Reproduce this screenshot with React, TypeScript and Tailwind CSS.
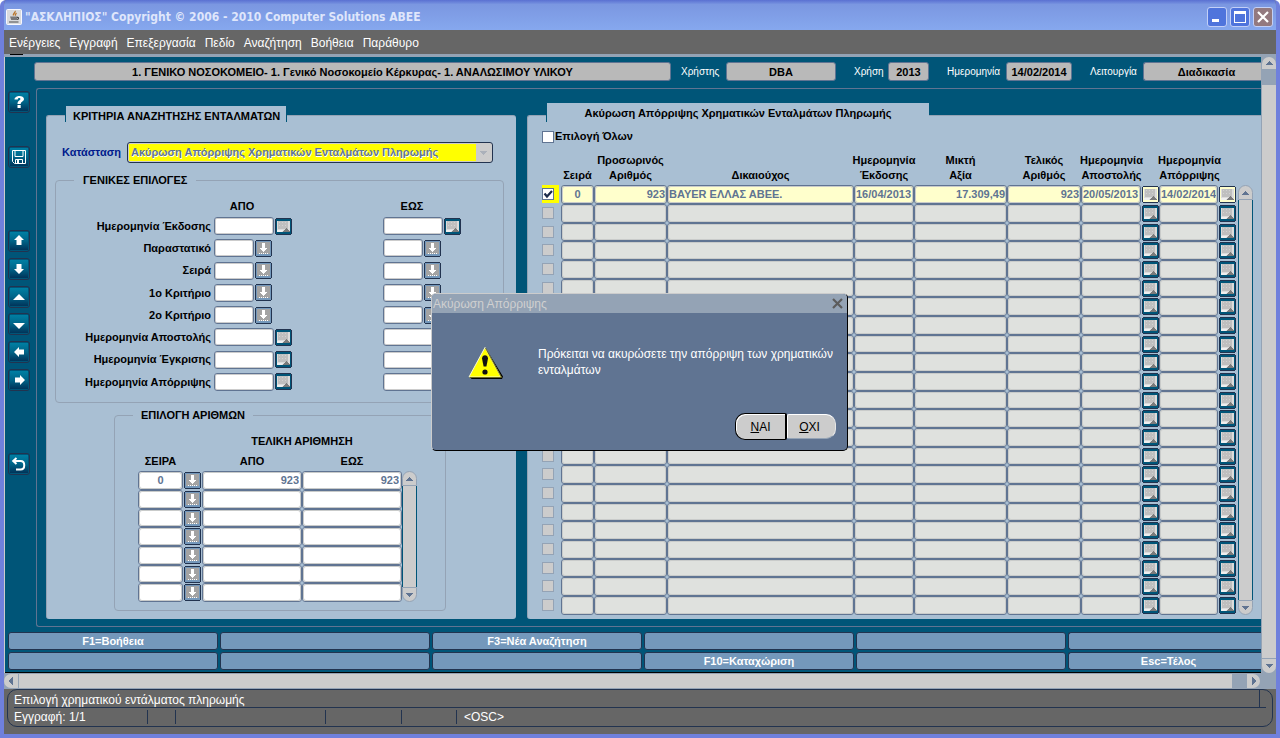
import { useState } from "react";
import type { ReactNode } from "react";
import clsx from "clsx";

const MENU = ["Ενέργειες", "Εγγραφή", "Επεξεργασία", "Πεδίο", "Αναζήτηση", "Βοήθεια", "Παράθυρο"];

const CRITERIA = [
  { label: "Ημερομηνία Έκδοσης", date: true },
  { label: "Παραστατικό", date: false },
  { label: "Σειρά", date: false },
  { label: "1ο Κριτήριο", date: false },
  { label: "2ο Κριτήριο", date: false },
  { label: "Ημερομηνία Αποστολής", date: true },
  { label: "Ημερομηνία Έγκρισης", date: true },
  { label: "Ημερομηνία Απόρριψης", date: true },
];

const NUMBER_ROWS = [["0", "923", "923"], ...Array.from({ length: 6 }, () => ["", "", ""])];

interface Column {
  id: string;
  title: string[];
  align: string;
  picker?: boolean;
}

const COLUMNS: Column[] = [
  { id: "series", title: ["Σειρά"], align: "text-center" },
  { id: "temp", title: ["Προσωρινός", "Αριθμός"], align: "text-right" },
  { id: "payee", title: ["Δικαιούχος"], align: "text-left" },
  { id: "issued", title: ["Ημερομηνία", "Έκδοσης"], align: "text-left" },
  { id: "gross", title: ["Μικτή", "Αξία"], align: "text-right" },
  { id: "final", title: ["Τελικός", "Αριθμός"], align: "text-right" },
  { id: "sent", title: ["Ημερομηνία", "Αποστολής"], align: "text-left", picker: true },
  { id: "rejected", title: ["Ημερομηνία", "Απόρριψης"], align: "text-left", picker: true },
];

const FIRST_ROW: Record<string, string> = {
  series: "0",
  temp: "923",
  payee: "BAYER ΕΛΛΑΣ ΑΒΕΕ.",
  issued: "16/04/2013",
  gross: "17.309,49",
  final: "923",
  sent: "20/05/2013",
  rejected: "14/02/2014",
};

const ROWS: Record<string, string>[] = [FIRST_ROW, ...Array.from({ length: 22 }, () => ({}))];

const FUNCTION_KEYS = ["F1=Βοήθεια", "", "F3=Νέα Αναζήτηση", "", "", "", "", "", "", "F10=Καταχώριση", "", "Esc=Τέλος"];

const rowHeight = (i: number) => (i % 3 === 2 ? "h-[18px]" : "h-[19px]");

const CELL = "rounded-[3px] border border-[#607492] p-0 shadow-[inset_0_0_0_1px_#c9cbca]";

function JavaIcon() {
  return (
    <svg width="16" height="16" viewBox="0 0 16 16">
      <rect x="0.5" y="0.5" width="15" height="15" rx="1" fill="#d9dadd" stroke="#f8f8ff" />
      <path d="M9 2c1 1.500-2.500 2.500-1.500 4.500M10.500 4c-1 .8-1.500 1.500-1 2.800" fill="none" stroke="#b8742a" strokeWidth="1.400" />
      <path d="M4 7.500h7.500l-.8 3.500h-5.500z" fill="#77777a" />
      <path d="M11 8.500c2.200-.5 2 2-.3 2M3 13h9.500" fill="none" stroke="#4a4a4c" strokeWidth="1.200" />
    </svg>
  );
}

function ArrowGlyph({ dir }: { dir: "up" | "down" | "left" | "right" }) {
  const paths = {
    up: "M4 0h1v1h1v1h1v1h1v1H1V3h1V2h1V1h1z",
    down: "M1 0h7v1H7v1H6v1H5v1H4V3H3V2H2V1H1z",
    left: "M4 0v8H3V7H2V6H1V5H0V3h1V2h1V1h1V0z",
    right: "M0 0h1v1h1v1h1v1h1v2H3v1H2v1H1v1H0z",
  };
  const sideways = dir === "left" || dir === "right";
  return (
    <svg width={sideways ? 4 : 9} height={sideways ? 8 : 4} viewBox={sideways ? "0 0 4 8" : "0 0 9 4"} shapeRendering="crispEdges">
      <path d={paths[dir]} fill="#607492" />
    </svg>
  );
}

function CalendarButton({ label, active }: { label: string; active?: boolean }) {
  return (
    <button type="button" aria-label={label} className="block">
      <svg width="17" height="17" viewBox="0 0 17 17" shapeRendering="crispEdges">
        <path d="M1 0h15v1h1v15h-1v1H1v-1H0V1h1z" fill="#22334f" />
        <rect x="1" y="1" width="15" height="15" fill={active ? "#ffffcc" : "#005578"} />
        <rect x="2" y="3" width="13" height="11" fill="#dcdcdc" />
        <rect x="3" y="3" width="10" height="8" fill="#bfbfbf" />
        <path d="M4 4h1v1H4zM7 4h1v1H7zM10 4h1v1h-1zM4 7h1v1H4zM7 7h1v1H7zM10 7h1v1h-1z" fill="#d2d2d2" />
        <path d="M11 10h1v1h1v1h1v1h1v1H8v-1h1v-1h1v-1h1z" fill="#7b7b7b" />
        <path d="M2 12h6v1H7v1H2z" fill="#efefef" />
      </svg>
    </button>
  );
}

function ListButton({ label }: { label: string }) {
  return (
    <button type="button" aria-label={label} className="block">
      <svg width="17" height="17" viewBox="0 0 17 17" shapeRendering="crispEdges">
        <path d="M1 0h15v1h1v15h-1v1H1v-1H0V1h1z" fill="#22334f" />
        <rect x="1" y="1" width="15" height="15" fill="#7498bb" />
        <rect x="2" y="2" width="13" height="12" fill="#a3a3a3" />
        <path d="M7 3h3v5h2v1h-1v1h-1v1H9v1H8v-1H7v-1H6V9H5V8h2zM4 13h1v1H4zM6 13h1v1H6zM8 13h1v1H8zM10 13h1v1h-1zM12 13h1v1h-1z" fill="#fff" />
      </svg>
    </button>
  );
}

function ToolButton({ label, className, children }: { label: string; className?: string; children: ReactNode }) {
  return (
    <button
      type="button"
      aria-label={label}
      className={clsx("size-[22px] rounded-[3px] border border-[#22334f] p-px", className)}
    >
      <svg
        width="18"
        height="18"
        viewBox="0 0 18 18"
        fill="#fff"
        className="bg-linear-to-b from-[#007fa3] via-[#006488] to-[#00345a]"
      >
        {children}
      </svg>
    </button>
  );
}

function ScrollColumn({ label, className }: { label: string; className: string }) {
  return (
    <div className={clsx("flex w-[15px] shrink-0 flex-col", className)}>
      <button type="button" aria-label={`${label} πάνω`} className="flex h-[15px] items-center justify-center rounded-t-full border border-[#94a3b5] bg-[#ccc]">
        <ArrowGlyph dir="up" />
      </button>
      <div className="flex-1 border-x border-[#005578] bg-[#ccc]" />
      <button type="button" aria-label={`${label} κάτω`} className="flex h-[15px] items-center justify-center rounded-b-full border border-[#94a3b5] bg-[#ccc]">
        <ArrowGlyph dir="down" />
      </button>
    </div>
  );
}

function Tick({ label, checked, onChange, disabled }: { label: string; checked: boolean; onChange?: () => void; disabled?: boolean }) {
  return (
    <span className="relative block size-3">
      <input
        type="checkbox"
        aria-label={label}
        checked={checked}
        disabled={disabled}
        onChange={() => onChange?.()}
        className="block size-3 appearance-none border border-[#607492] bg-white disabled:border-[#94a3b5] disabled:bg-[#ccc]"
      />
      {checked && (
        <svg width="12" height="12" viewBox="0 0 12 12" className="pointer-events-none absolute inset-0">
          <path d="M2.500 5.500 5 8.500 10 3" fill="none" stroke="#1b2a49" strokeWidth="2.200" />
        </svg>
      )}
    </span>
  );
}

interface HeaderFieldProps {
  label: string;
  value: string;
  labelWidth: string;
  width: string;
}

function HeaderField({ label, value, labelWidth, width }: HeaderFieldProps) {
  return (
    <label className="flex shrink-0 items-center text-[10px] font-normal text-white">
      <span className={labelWidth}>{label}</span>
      <input
        readOnly
        defaultValue={value}
        className={clsx("h-[19px] rounded-[3px] border border-[#607492] bg-[#b9b9b9] text-center text-[11px] font-bold text-black", width)}
      />
    </label>
  );
}

function TitleBar() {
  const box = "flex size-5 items-center justify-center rounded-[3px] border border-[#c3d0f7]";
  return (
    <header className="flex h-[30px] items-center gap-[3px] bg-linear-to-b from-[#5a70d2] via-[#7b97e1] via-15% to-[#86a8ee] pt-[3px] pr-[3px] pl-[2px] text-[#dfe6fb]">
      <JavaIcon />
      <h1 className="flex-1 font-['DejaVu_Sans_Condensed','DejaVu_Sans',sans-serif] text-[12px] leading-4">
        "ΑΣΚΛΗΠΙΟΣ" Copyright © 2006 - 2010 Computer Solutions ABEE
      </h1>
      <button type="button" aria-label="Ελαχιστοποίηση" className={clsx(box, "bg-[#4f74dc]")}>
        <svg width="12" height="12" viewBox="0 0 12 12">
          <path d="M1 8h7v3H1z" fill="#fff" />
        </svg>
      </button>
      <button type="button" aria-label="Μεγιστοποίηση" className={clsx(box, "bg-[#4f74dc]")}>
        <svg width="12" height="12" viewBox="0 0 12 12" shapeRendering="crispEdges">
          <path d="M0 0h12v12H0zM1 3v8h10V3z" fill="#fff" fillRule="evenodd" />
        </svg>
      </button>
      <button type="button" aria-label="Κλείσιμο" className={clsx(box, "bg-[#93797f]")}>
        <svg width="12" height="12" viewBox="0 0 12 12">
          <path d="m1 1 10 10M11 1 1 11" stroke="#fff" strokeWidth="2.200" />
        </svg>
      </button>
    </header>
  );
}

function Toolbar() {
  return (
    <aside className="flex w-[31px] shrink-0 flex-col gap-[6px] pt-[3px] pl-[3px]">
      <ToolButton label="Βοήθεια" className="mb-[27px]">
        <path d="M4.500 6.500C4.500 1.800 14 1.800 14 6c0 2.500-3.300 2.500-3.300 5H7.500c0-3.500 2.900-3.500 2.900-5 0-1.300-2.600-1.200-2.600.5zM7.500 12h3.200v3H7.500z" />
      </ToolButton>
      <ToolButton label="Αποθήκευση" className="mb-14">
        <path d="M2.500 2.500h13v13h-11l-2-2z" fill="none" stroke="#fff" />
        <path d="M5 2.500v6h8v-6M5.500 15.500v-4h7v4" fill="none" stroke="#fff" />
        <path d="M7 12h2v3H7z" />
      </ToolButton>
      <ToolButton label="Προηγούμενη εγγραφή">
        <path d="M9 3l5 5h-2.500v5h-5V8H4z" />
      </ToolButton>
      <ToolButton label="Επόμενη εγγραφή">
        <path d="M9 14l5-5h-2.500V4h-5v5H4z" />
      </ToolButton>
      <ToolButton label="Πάνω">
        <path d="M9 6l6 6H3z" />
      </ToolButton>
      <ToolButton label="Κάτω" className="-mt-px">
        <path d="M9 14L3 8h12z" />
      </ToolButton>
      <ToolButton label="Προηγούμενο πεδίο">
        <path d="M4 9l5-5v2.500h5v5H9V14z" />
      </ToolButton>
      <ToolButton label="Επόμενο πεδίο" className="mb-14">
        <path d="M15 9l-5-5v2.500H5v5h5V14z" />
      </ToolButton>
      <ToolButton label="Επιστροφή">
        <path d="M3 6h7.500c5 0 5 8.500 0 8.500H6M6.500 3 3.200 6l3.300 3" fill="none" stroke="#fff" strokeWidth="2" />
      </ToolButton>
    </aside>
  );
}

function CriteriaField({ label, date }: { label: string; date: boolean }) {
  return (
    <div className="flex items-center gap-px">
      <input
        aria-label={label}
        className={clsx("h-[18px] rounded-[3px] border border-[#607492] bg-white shadow-[inset_0_0_0_1px_#ccc]", date ? "w-[60px]" : "w-10")}
      />
      {date ? <CalendarButton label={`${label} ημερολόγιο`} /> : <ListButton label={`${label} λίστα`} />}
    </div>
  );
}

function SearchPanel() {
  return (
    <section className="w-[470px] shrink-0 rounded-[3px] border-t border-l border-[#94a3b5] bg-[#a9bfd3] pb-2">
      <h2 className="-mt-[10px] ml-[18px] h-4 w-[222px] border-x border-[#005578] bg-[#a9bfd3] pl-[7px] leading-5 whitespace-nowrap">
        ΚΡΙΤΗΡΙΑ ΑΝΑΖΗΤΗΣΗΣ ΕΝΤΑΛΜΑΤΩΝ
      </h2>

      <div className="mt-5 flex items-center pl-[15px]">
        <label htmlFor="status" className="w-[65px] text-[#001a8c]">
          Κατάσταση
        </label>
        <div className="flex h-[21px] w-[366px] rounded-[3px] border border-[#22334f] bg-[#ccc] p-px">
          <select
            id="status"
            disabled
            className="min-w-0 flex-1 appearance-none bg-[#ffff00] pl-[2px] text-[#607492] opacity-100 [text-shadow:1px_1px_0_#fff]"
          >
            <option>Ακύρωση Απόρριψης Χρηματικών Ενταλμάτων Πληρωμής</option>
          </select>
          <span className="flex w-[15px] items-center justify-center opacity-30">
            <ArrowGlyph dir="down" />
          </span>
        </div>
      </div>

      <fieldset className="mt-[10px] mr-3 ml-2 rounded-[4px] border border-[#94a3b5] pb-[9px]">
        <legend className="ml-[18px] px-[9px] leading-[15px]">ΓΕΝΙΚΕΣ ΕΠΙΛΟΓΕΣ</legend>
        <div className="grid grid-cols-[158px_169px_1fr] pt-[11px] pb-px leading-[15px]">
          <span />
          <span className="w-[56px] text-center">ΑΠΟ</span>
          <span className="w-[58px] text-center">ΕΩΣ</span>
        </div>
        <div className="grid h-[178px] auto-rows-fr">
          {CRITERIA.map(({ label, date }) => (
            <div key={label} className="grid grid-cols-[158px_169px_1fr] items-center">
              <span className="pr-[3px] text-right">{label}</span>
              <CriteriaField label={`${label} από`} date={date} />
              <CriteriaField label={`${label} έως`} date={date} />
            </div>
          ))}
        </div>
      </fieldset>

      <fieldset className="mt-[5px] ml-[67px] w-[332px] rounded-[4px] border border-[#94a3b5] pb-2">
        <legend className="ml-[18px] px-2 leading-[15px]">ΕΠΙΛΟΓΗ ΑΡΙΘΜΩΝ</legend>
        <div className="flex pt-[11px] pl-[23px]">
          <table className="w-[264px] table-fixed border-separate border-spacing-0">
            <colgroup>
              <col className="w-[45px]" />
              <col className="w-[19px]" />
              <col />
              <col />
            </colgroup>
            <thead>
              <tr className="h-5 align-top leading-[15px]">
                <td colSpan={2} />
                <th colSpan={2} className="p-0">ΤΕΛΙΚΗ ΑΡΙΘΜΗΣΗ</th>
              </tr>
              <tr className="h-[17px] align-top leading-[15px]">
                <th className="p-0">ΣΕΙΡΑ</th>
                <td />
                <th className="p-0">ΑΠΟ</th>
                <th className="p-0">ΕΩΣ</th>
              </tr>
            </thead>
            <tbody>
              {NUMBER_ROWS.map(([series, from, to], i) => (
                <tr key={i} className={rowHeight(i)}>
                  <td className={clsx(CELL, "bg-white")}>
                    <input aria-label="Σειρά" defaultValue={series} className="block h-4 w-full text-center text-[#607492]" />
                  </td>
                  <td className="p-0 pl-px">
                    <ListButton label="Λίστα σειρών" />
                  </td>
                  <td className={clsx(CELL, "bg-white")}>
                    <input aria-label="Από" defaultValue={from} className="block h-4 w-full pr-[2px] text-right text-[#607492]" />
                  </td>
                  <td className={clsx(CELL, "bg-white")}>
                    <input aria-label="Έως" defaultValue={to} className="block h-4 w-full pr-[2px] text-right text-[#607492]" />
                  </td>
                </tr>
              ))}
            </tbody>
          </table>
          <ScrollColumn label="Κύλιση αριθμών" className="mt-[37px]" />
        </div>
      </fieldset>
    </section>
  );
}

function OrdersPanel() {
  const [all, setAll] = useState(false);
  const [selected, setSelected] = useState(true);

  return (
    <section className="min-w-0 flex-1 rounded-l-[3px] border-t border-l border-[#94a3b5] bg-[#a9bfd3] pr-2">
      <h2 className="-mt-[13px] ml-[18px] h-[19px] w-[383px] border-l border-[#005578] bg-[#a9bfd3] text-center leading-5">
        Ακύρωση Απόρριψης Χρηματικών Ενταλμάτων Πληρωμής
      </h2>
      <label className="mt-2 ml-[14px] flex h-[13px] items-center gap-px">
        <Tick label="Επιλογή Όλων" checked={all} onChange={() => setAll(!all)} />
        Επιλογή Όλων
      </label>

      <div className="flex gap-px pl-[14px]">
        <table className="w-full min-w-0 table-fixed border-separate border-spacing-0">
          <colgroup>
            <col className="w-[19px]" />
            <col className="w-[33px]" />
            <col className="w-[73px]" />
            <col />
            <col className="w-[60px]" />
            <col className="w-[93px]" />
            <col className="w-[74px]" />
            <col className="w-[60px]" />
            <col className="w-[18px]" />
            <col className="w-[59px]" />
            <col className="w-[19px]" />
          </colgroup>
          <thead>
            <tr className="h-[42px] align-bottom leading-[15px]">
              <td />
              {COLUMNS.map(col => (
                <th key={col.id} colSpan={col.picker ? 2 : 1} className={clsx("p-0 pb-[2px] whitespace-nowrap", col.picker && "pr-[17px]")}>
                  <span className="flex flex-col items-center">
                    {col.title.map(line => (
                      <span key={line}>{line}</span>
                    ))}
                  </span>
                </th>
              ))}
            </tr>
          </thead>
          <tbody>
            {ROWS.map((row, i) => (
              <tr key={i} className={rowHeight(i)}>
                <td className="p-0 align-top">
                  <div className={clsx("h-[18px] w-[17px] pt-[3px]", i === 0 && "bg-[#ffff00]")}>
                    <Tick label={`Εγγραφή ${i + 1}`} checked={i === 0 && selected} disabled={i > 0} onChange={() => setSelected(!selected)} />
                  </div>
                </td>
                {COLUMNS.map(col => [
                  <td key={col.id} className={clsx(CELL, i === 0 ? "bg-[#ffffcc]" : "bg-[#dfe1de]")}>
                    <input
                      readOnly
                      aria-label={col.title.join(" ")}
                      defaultValue={row[col.id] ?? ""}
                      className={clsx("block h-4 w-full px-px text-[#607492]", col.align)}
                    />
                  </td>,
                  col.picker && (
                    <td key={`${col.id}-picker`} className="p-0 pl-px">
                      <CalendarButton label={`${col.title.join(" ")} ημερολόγιο`} active={i === 0} />
                    </td>
                  ),
                ])}
              </tr>
            ))}
          </tbody>
        </table>
        <ScrollColumn label="Κύλιση ενταλμάτων" className="mt-[42px]" />
      </div>
    </section>
  );
}

function ConfirmDialog() {
  return (
    <div
      role="dialog"
      aria-labelledby="confirm-title"
      className="absolute top-[293px] left-[427px] w-[417px] overflow-hidden rounded-[5px] border border-t-[#ccc] border-r-black border-b-black border-l-[#ccc] bg-[#607492] text-[12px] font-normal text-white"
    >
      <div className="flex h-[19px] items-center justify-between bg-[#94a3b5] pr-1 pl-px text-[#d0d0d0]">
        <h2 id="confirm-title">Ακύρωση Απόρριψης</h2>
        <button type="button" aria-label="Κλείσιμο">
          <svg width="11" height="11" viewBox="0 0 11 11">
            <path d="m1 1 9 9M10 1l-9 9" stroke="#5c5c5c" strokeWidth="2.200" />
          </svg>
        </button>
      </div>
      <div className="flex pt-[33px] pl-9">
        <svg width="36" height="34" viewBox="0 0 36 34">
          <path d="M17.500 2 35 30.500 34 33H3z" fill="#000" />
          <path d="M17 1.500 33 31H1z" fill="#ffff00" stroke="#f6f6d8" />
          <path d="M1.500 31.500h32L17.500 2" fill="none" stroke="#6d6a1c" />
          <path d="M14 12.500c0-4.500 6-4.500 6 0l-1.600 8h-2.800z" fill="#111" />
          <circle cx="17" cy="26" r="2.600" fill="#111" />
        </svg>
        <p className="ml-[34px] w-[300px] leading-4">Πρόκειται να ακυρώσετε την απόρριψη των χρηματικών ενταλμάτων</p>
      </div>
      <div className="flex items-center justify-end pt-[33px] pr-[11px] pb-[10px] text-black">
        <button type="button" className="h-[27px] w-[52px] rounded-l-[10px] rounded-r-[2px] border border-r-2 border-black bg-[#ccc] shadow-[inset_1px_1px_0_#fff]">
          <u>Ν</u>ΑΙ
        </button>
        <button type="button" className="h-[25px] w-[49px] rounded-l-[2px] rounded-r-[10px] border border-t-white border-r-[#e6e6e6] border-b-[#94a3b5] border-l-white bg-[#ccc] pr-1">
          <u>Ο</u>ΧΙ
        </button>
      </div>
    </div>
  );
}

function StatusBar() {
  return (
    <footer className="bg-[#666] px-[3px] pb-[6px] text-[12px] font-normal text-white">
      <div className="rounded-[10px] border border-[#22334f] px-[6px]">
        <div className="flex h-[18px] justify-between border-b border-[#22334f] leading-5">
          <span>Επιλογή χρηματικού εντάλματος πληρωμής</span>
          <span className="mr-[6px] w-px bg-[#22334f]" />
        </div>
        <div className="flex h-[18px] items-center leading-[18px]">
          <span className="w-[133px]">Εγγραφή: 1/1</span>
          <span className="h-[14px] w-7 border-l border-[#22334f]" />
          <span className="h-[14px] w-[150px] border-l border-[#22334f]" />
          <span className="h-[14px] w-[76px] border-l border-[#22334f]" />
          <span className="h-[14px] w-14 border-x border-[#22334f]" />
          <span className="ml-[7px]">&lt;OSC&gt;</span>
        </div>
      </div>
    </footer>
  );
}

export default function App() {
  return (
    <div className="relative flex min-h-screen flex-col overflow-hidden rounded-t-[6px] border-x-4 border-b-4 border-[#6f80dc] bg-[#666] font-['Liberation_Sans',Arial,sans-serif] text-[11px] font-bold text-black">
      <TitleBar />

      <nav className="flex h-6 items-center gap-[9px] bg-[#666] pt-px pl-[5px] font-normal text-white">
        {MENU.map(item => (
          <button key={item} type="button" className="text-[12px]">
            {item}
          </button>
        ))}
      </nav>
      <div className="h-[3px] bg-[#94a3b5]">
        <div className="ml-[6px] h-px w-[13px] bg-black" />
      </div>

      <div className="flex border-l border-[#ccc] bg-[#005578]">
        <main className="min-w-0 flex-1 border-b border-black pt-[5px] pb-[2px]">
          <div className="flex items-center pl-[29px]">
            <input
              readOnly
              aria-label="Μονάδα"
              defaultValue="1. ΓΕΝΙΚΟ ΝΟΣΟΚΟΜΕΙΟ- 1. Γενικό Νοσοκομείο Κέρκυρας- 1. ΑΝΑΛΩΣΙΜΟΥ ΥΛΙΚΟΥ"
              className="mr-[10px] h-[19px] min-w-0 flex-1 rounded-[3px] border border-[#607492] bg-[#b9b9b9] text-center"
            />
            <div className="flex gap-[18px]">
              <HeaderField label="Χρήστης" value="DBA" labelWidth="w-[45px]" width="w-[110px]" />
              <HeaderField label="Χρήση" value="2013" labelWidth="w-[34px]" width="w-[41px]" />
              <HeaderField label="Ημερομηνία" value="14/02/2014" labelWidth="w-[59px]" width="w-[66px]" />
              <HeaderField label="Λειτουργία" value="Διαδικασία" labelWidth="w-[53px]" width="w-[118px] rounded-r-none border-r-0 pl-2" />
            </div>
          </div>

          <div className="mt-[7px] flex">
            <Toolbar />
            <div className="flex min-w-0 flex-1 gap-[11px] rounded-l-[3px] border-y border-l border-[#607492] pt-[26px] pb-[7px] pl-[9px]">
              <SearchPanel />
              <OrdersPanel />
            </div>
          </div>

          <div className="mt-[5px] ml-[3px] grid grid-cols-[210fr_210fr_210fr_210fr_210fr_193fr] gap-[2px]">
            {FUNCTION_KEYS.map((key, i) => (
              <button
                key={i}
                type="button"
                aria-label={key || `Πλήκτρο ${i + 1}`}
                className={clsx(
                  "h-[18px] border border-[#22334f] bg-[#7498bb] text-white",
                  i % 6 === 5 ? "rounded-l-[3px] border-r-0 pl-[7px]" : "rounded-[3px]"
                )}
              >
                {key}
              </button>
            ))}
          </div>
        </main>

        <div className="flex w-[15px] shrink-0 flex-col border-l border-[#94a3b5] bg-[#94a3b5]">
          <button type="button" aria-label="Κύλιση πάνω" className="flex h-3 items-center justify-center rounded-t-full bg-[#ccc]">
            <ArrowGlyph dir="up" />
          </button>
          <div className="mt-4 flex-1 border-b border-[#94a3b5] bg-[#ccc]" />
          <button type="button" aria-label="Κύλιση κάτω" className="flex h-[14px] items-center justify-center rounded-b-full bg-[#ccc]">
            <ArrowGlyph dir="down" />
          </button>
        </div>
      </div>

      <div className="flex h-4 border-y border-[#94a3b5] bg-[#94a3b5] pr-4">
        <button type="button" aria-label="Κύλιση αριστερά" className="mr-px flex w-[14px] items-center justify-center rounded-l-full bg-[#ccc]">
          <ArrowGlyph dir="left" />
        </button>
        <div className="mr-[15px] flex-1 bg-[#ccc]" />
        <button type="button" aria-label="Κύλιση δεξιά" className="flex w-[13px] items-center justify-center rounded-r-full bg-[#ccc]">
          <ArrowGlyph dir="right" />
        </button>
      </div>

      <StatusBar />
      <ConfirmDialog />
    </div>
  );
}
